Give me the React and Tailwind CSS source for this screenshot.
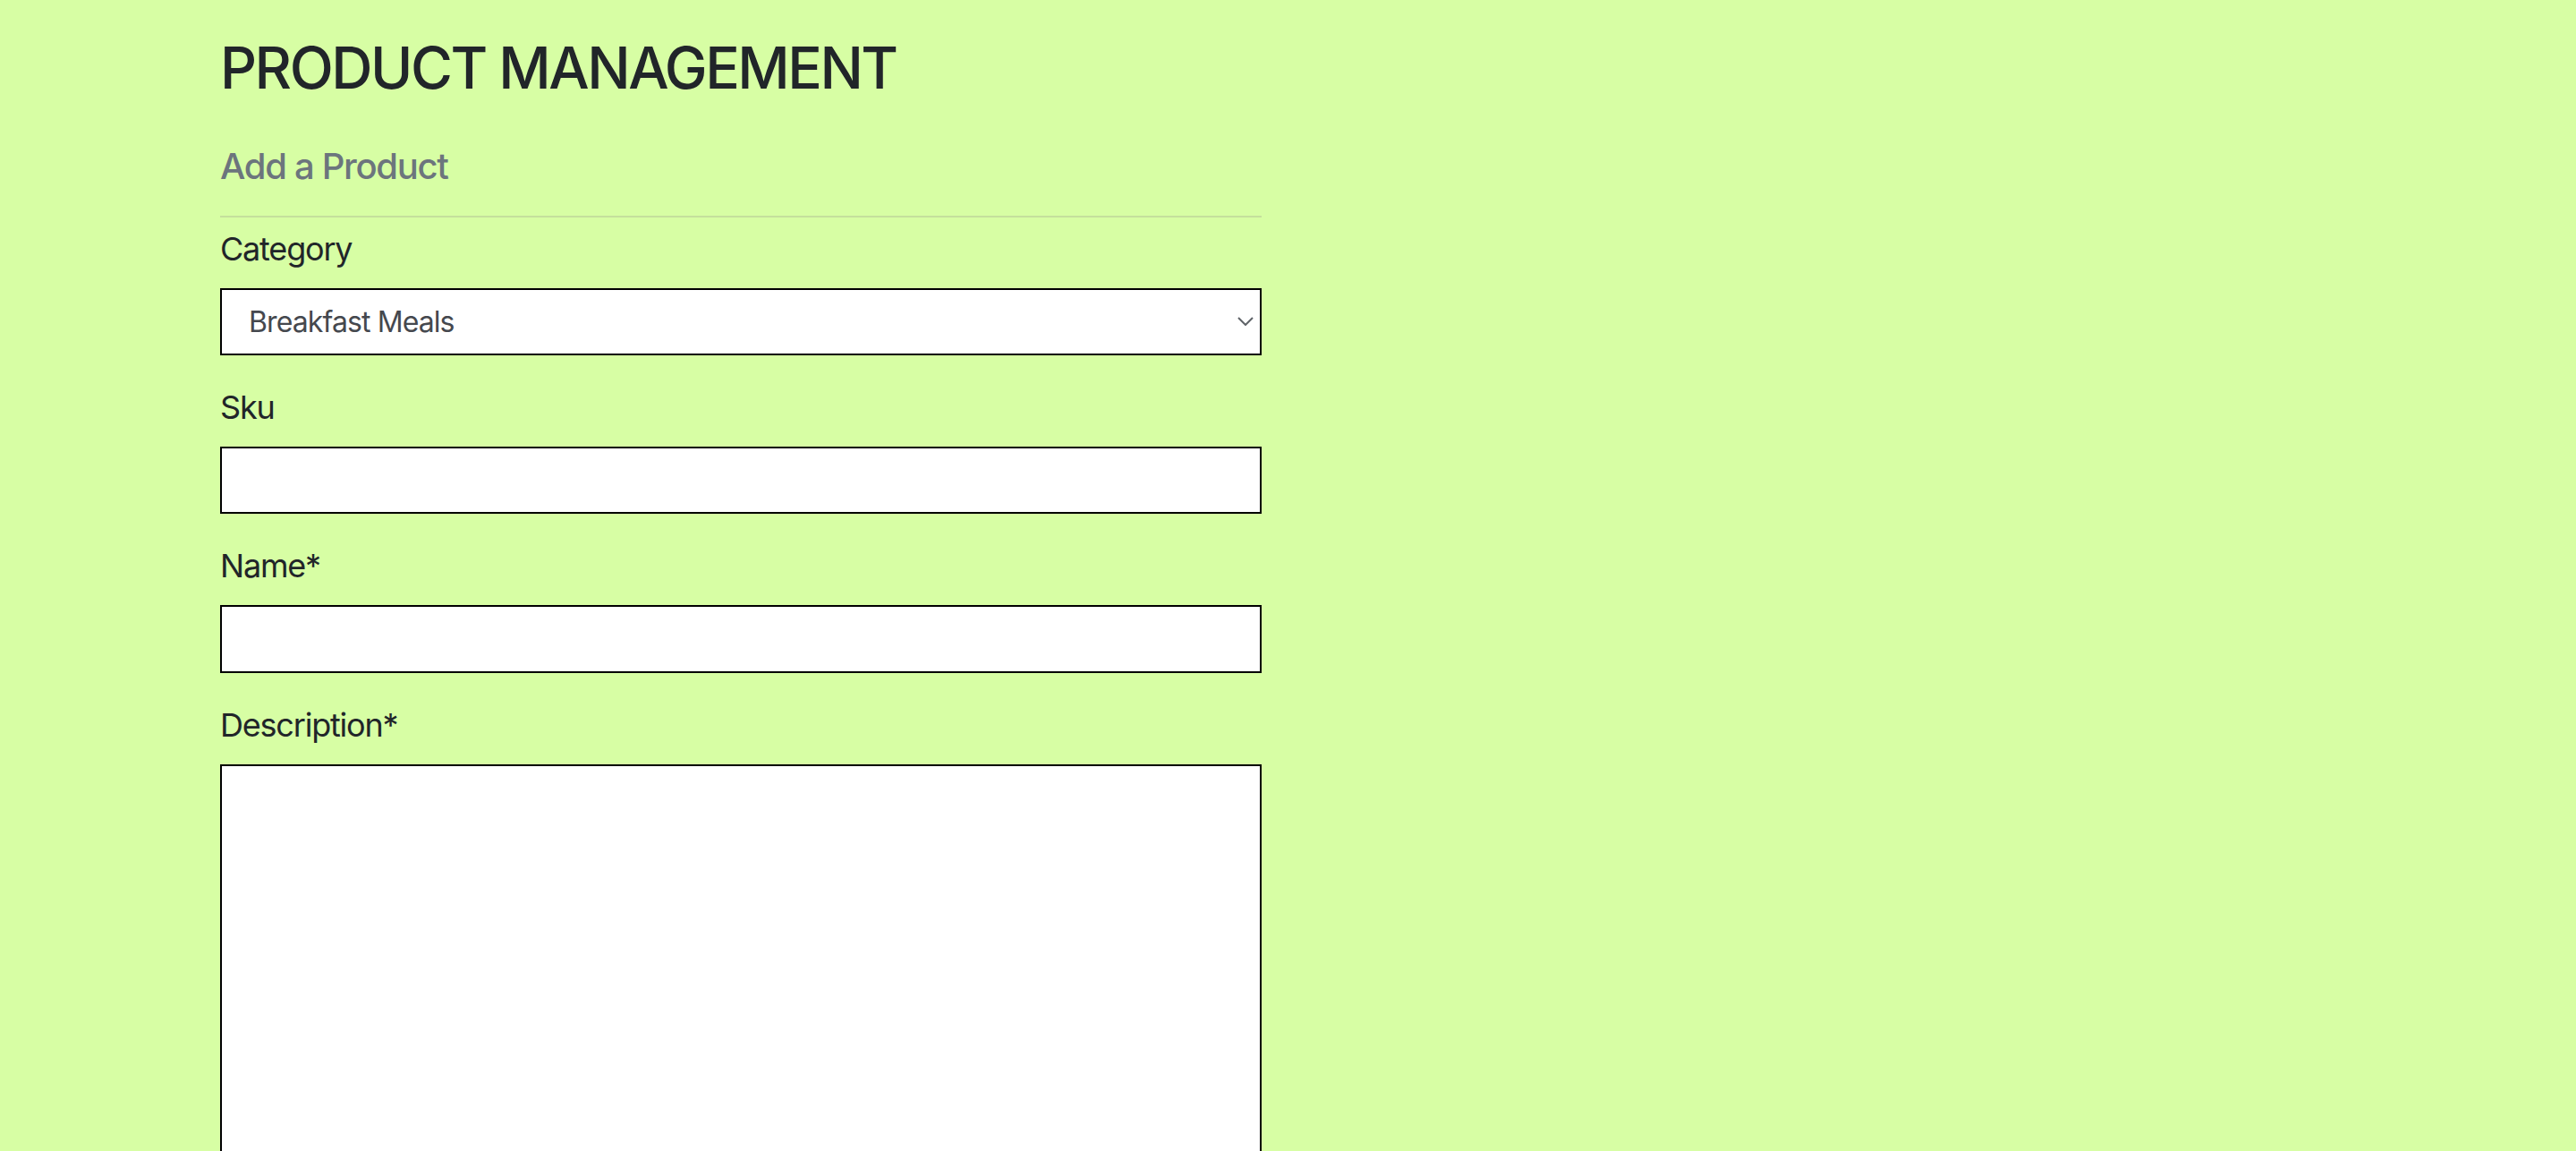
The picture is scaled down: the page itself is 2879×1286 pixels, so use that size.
import { useState } from "react"

const categories = ["Breakfast Meals", "Lunch Meals", "Dinner Meals", "Drinks", "Desserts"]

function Field({ label, children }) {
  return (
    <div className="mb-8">
      <label className="block text-[36px] leading-[52px] tracking-[-1.2px] text-[#212529] mb-[18px]">{label}</label>
      {children}
    </div>
  )
}

export default function App() {
  const [category, setCategory] = useState(categories[0])
  const [sku, setSku] = useState("")
  const [name, setName] = useState("")
  const [description, setDescription] = useState("")

  return (
    <div
      className="min-h-screen h-[1286px] overflow-hidden bg-[#d7fea4]"
      style={{ fontFamily: 'Inter, "Liberation Sans", Arial, sans-serif' }}
    >
      <main className="pl-[246px] pt-[37px] w-[1410px]">
        <h1 className="text-[64px] leading-[77px] font-medium tracking-[-2.45px] text-[#212529] mb-[48px]">
          PRODUCT MANAGEMENT
        </h1>

        <h5 className="text-[40px] leading-[48px] font-medium tracking-[-1.3px] text-[#6c757d]">Add a Product</h5>
        <hr className="mt-[31px] mb-[9px] border-0 border-t-2 border-[#c4e09c]" />

        {/* Add product form */}
        <form onSubmit={(e) => e.preventDefault()}>
          <Field label="Category">
            <div className="relative">
              <select
                value={category}
                onChange={(e) => setCategory(e.target.value)}
                className="appearance-none block w-full h-[75px] bg-white border-2 border-black pl-[30px] text-[32px] tracking-[-0.9px] text-[#45484e] outline-none"
              >
                {categories.map((c) => (
                  <option key={c}>{c}</option>
                ))}
              </select>
              <svg
                className="absolute right-[9px] top-[32px] w-[18px] h-[10px]"
                viewBox="0 0 18 10"
                fill="none"
                stroke="#5f6368"
                strokeWidth="2"
              >
                <path d="M1 1l8 8 8-8" />
              </svg>
            </div>
          </Field>

          <Field label="Sku">
            <input
              type="text"
              value={sku}
              onChange={(e) => setSku(e.target.value)}
              className="block w-full h-[75px] bg-white border-2 border-black px-[32px] text-[32px] outline-none"
            />
          </Field>

          <Field label="Name*">
            <input
              type="text"
              value={name}
              onChange={(e) => setName(e.target.value)}
              className="block w-full h-[76px] bg-white border-2 border-black px-[32px] text-[32px] outline-none"
            />
          </Field>

          <Field label="Description*">
            <textarea
              value={description}
              onChange={(e) => setDescription(e.target.value)}
              className="block w-full h-[600px] resize-none bg-white border-2 border-black px-[32px] py-4 text-[32px] outline-none"
            />
          </Field>
        </form>
      </main>
    </div>
  )
}
